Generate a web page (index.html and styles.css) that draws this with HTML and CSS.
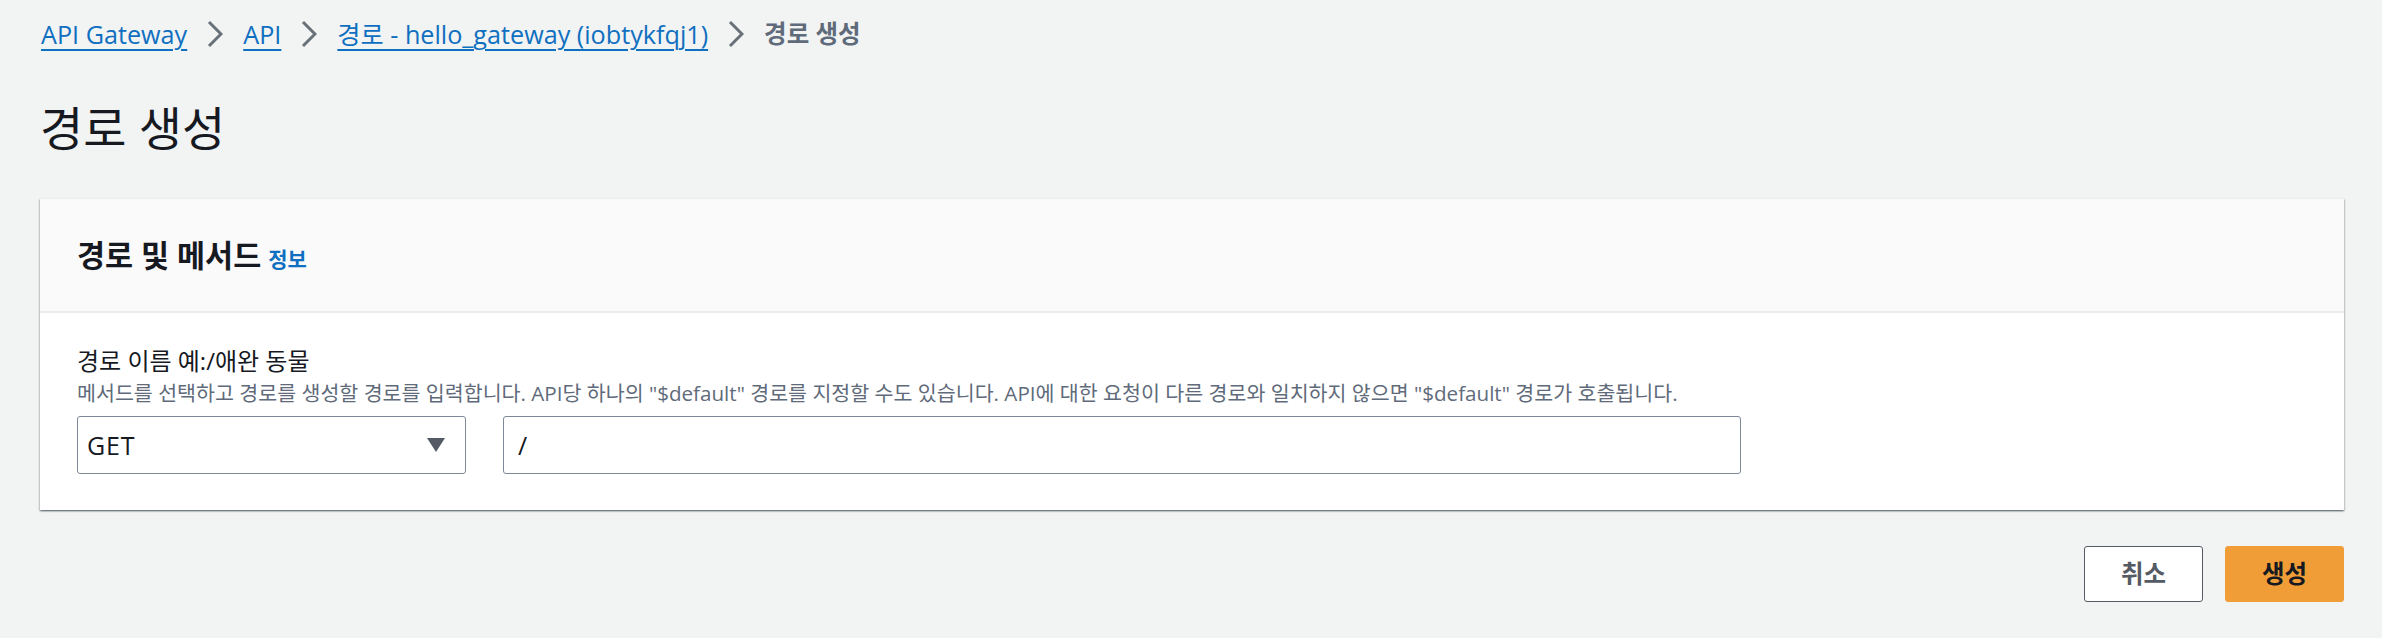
FILE: index.html
```html
<!DOCTYPE html>
<html lang="ko">
<head>
<meta charset="utf-8">
<title>경로 생성</title>
<link rel="stylesheet" href="styles.css">
</head>
<body>
<div class="page">
  <nav class="breadcrumbs">
    <a class="crumb" href="#">API Gateway</a>
    <span class="sep"><svg viewBox="0 0 16 28" width="16" height="28"><path d="M2 2 L14 14 L2 26" fill="none" stroke="#687078" stroke-width="3"/></svg></span>
    <a class="crumb" href="#">API</a>
    <span class="sep"><svg viewBox="0 0 16 28" width="16" height="28"><path d="M2 2 L14 14 L2 26" fill="none" stroke="#687078" stroke-width="3"/></svg></span>
    <a class="crumb" href="#">경로 - hello_gateway (iobtykfqj1)</a>
    <span class="sep"><svg viewBox="0 0 16 28" width="16" height="28"><path d="M2 2 L14 14 L2 26" fill="none" stroke="#687078" stroke-width="3"/></svg></span>
    <span class="current">경로 생성</span>
  </nav>

  <h1 class="title">경로 생성</h1>

  <section class="card">
    <header class="card-header">
      <div class="card-heading">
        <h2 class="card-title">경로 및 메서드</h2>
        <a class="info" href="#">정보</a>
      </div>
    </header>
    <div class="card-body">
      <div class="label">경로 이름 예:/애완 동물</div>
      <div class="desc">메서드를 선택하고 경로를 생성할 경로를 입력합니다. API당 하나의 "$default" 경로를 지정할 수도 있습니다. API에 대한 요청이 다른 경로와 일치하지 않으면 "$default" 경로가 호출됩니다.</div>
      <div class="fields">
        <div class="select">
          <span class="select-value">GET</span>
          <svg class="caret" viewBox="0 0 18 14" width="18" height="14"><path d="M0 0 H18 L9 14 Z" fill="#545b64"/></svg>
        </div>
        <div class="input"><span class="input-value">/</span></div>
      </div>
    </div>
  </section>

  <div class="actions">
    <button class="btn btn-cancel" type="button">취소</button>
    <button class="btn btn-primary" type="button">생성</button>
  </div>
</div>
</body>
</html>
```

FILE: styles.css
```css
* { box-sizing: border-box; }
html, body { margin: 0; padding: 0; }
body {
  background: #f2f3f3;
  font-family: "Open Sans", "Noto Sans CJK KR", sans-serif;
  color: #16191f;
  width: 2382px;
  height: 638px;
  overflow: hidden;
}
.page {
  padding: 0 38px 0 40px;
}
.breadcrumbs {
  display: flex;
  align-items: center;
  height: 30px;
  margin-top: 19px;
  padding-left: 1px;
  font-size: 25.2px;
  line-height: 30px;
  white-space: nowrap;
}
.crumb {
  color: #0f6fc0;
  text-decoration: underline;
  text-decoration-thickness: 2px;
  text-underline-offset: 5px;
}
.sep {
  display: flex;
  align-items: center;
  margin: 0 20px;
}
.sep svg { display: block; }
.current {
  color: #5f6b7a;
  font-weight: 700;
  font-size: 24.5px;
}
.title {
  margin: 51px 0 0 0;
  font-size: 47px;
  font-weight: 400;
  line-height: 56px;
  color: #16191f;
}
.card {
  margin-top: 42px;
  background: #fff;
  box-shadow: 0 1.5px 1.5px 0 rgba(0, 28, 36, 0.4), 1px 1px 1.5px 0 rgba(0, 28, 36, 0.15), -1px 1px 1.5px 0 rgba(0, 28, 36, 0.15);
  border-top: 1px solid #eaeded;
}
.card-header {
  display: flex;
  align-items: center;
  height: 114px;
  padding: 0 37px;
  background: #fafafa;
  border-bottom: 2px solid #eaeded;
}
.card-heading {
  display: flex;
  align-items: baseline;
}
.card-title {
  margin: 0;
  font-size: 30.5px;
  font-weight: 700;
  line-height: 40px;
  color: #16191f;
}
.info {
  margin-left: 7px;
  font-size: 21px;
  font-weight: 700;
  color: #0f6fc0;
  text-decoration: none;
}
.card-body {
  padding: 30px 37px 36px;
}
.label {
  font-size: 24px;
  line-height: 35px;
  color: #16191f;
}
.desc {
  font-size: 20.6px;
  line-height: 30px;
  color: #5f6b7a;
  white-space: nowrap;
}
.fields {
  display: flex;
  gap: 37px;
  margin-top: 8px;
}
.select {
  display: flex;
  align-items: center;
  justify-content: space-between;
  width: 389px;
  height: 58px;
  padding: 0 20px 0 9px;
  border: 1.5px solid #7d8998;
  border-radius: 3px;
  font-size: 25px;
  color: #16191f;
}
.select-value { letter-spacing: 0.8px; }
.caret { display: block; }
.input {
  display: flex;
  align-items: center;
  width: 1238px;
  height: 58px;
  padding: 0 14px;
  border: 1.5px solid #7d8998;
  border-radius: 3px;
  font-size: 25px;
}
.actions {
  display: flex;
  justify-content: flex-end;
  gap: 22px;
  margin-top: 36px;
}
.btn {
  height: 56px;
  width: 119px;
  border-radius: 3px;
  font-family: inherit;
  font-size: 24.5px;
  font-weight: 700;
  line-height: 1;
  padding: 0;
  cursor: pointer;
}
.btn-cancel {
  background: #fff;
  color: #545b64;
  border: 1.5px solid #545b64;
}
.btn-primary {
  background: #f09d38;
  color: #16191f;
  border: 1.5px solid #f09d38;
}
```
